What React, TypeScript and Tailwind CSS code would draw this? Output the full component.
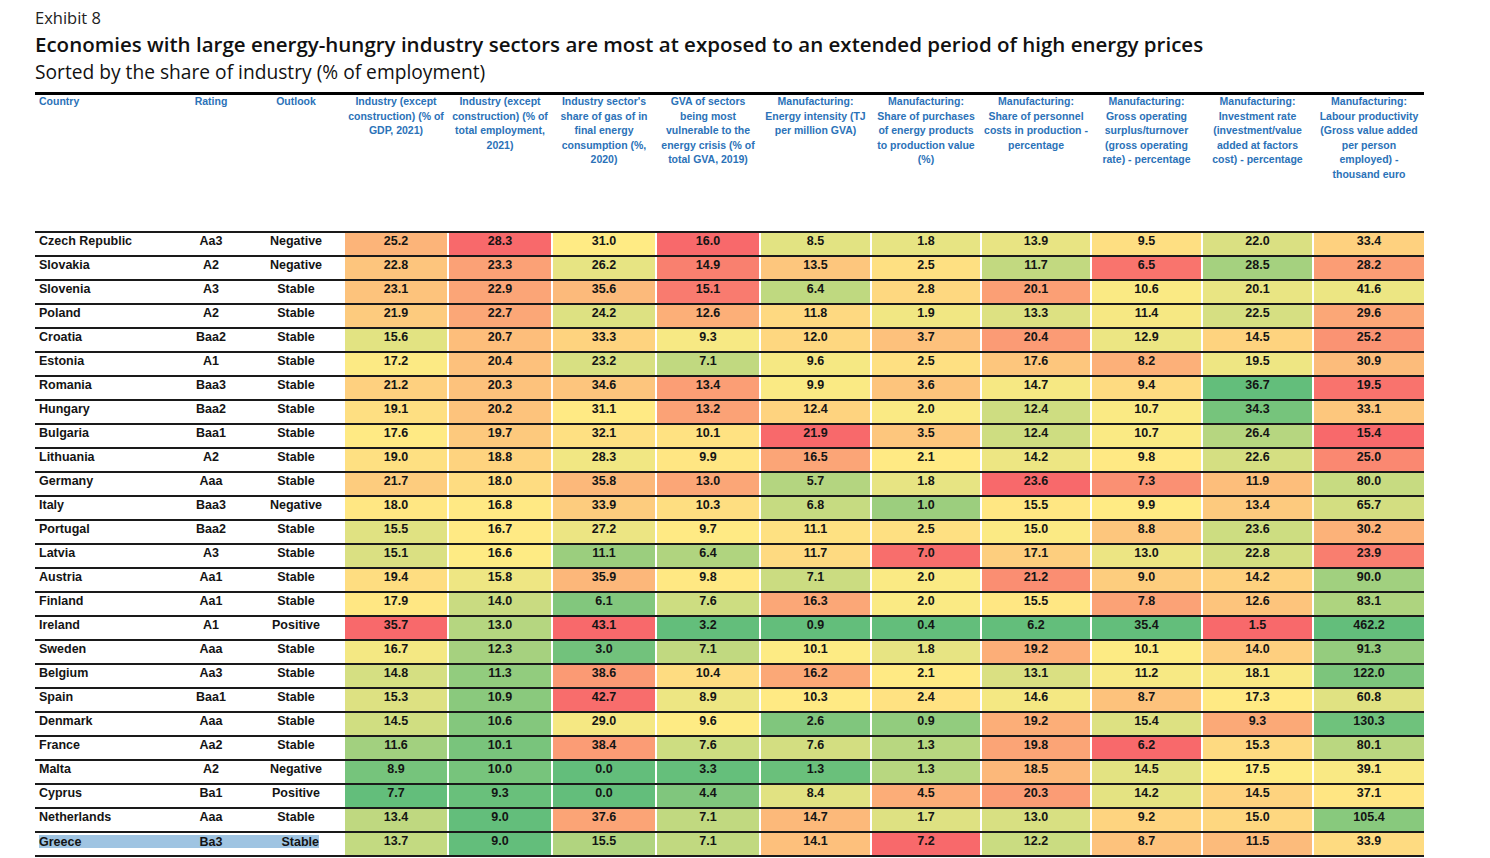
import React from "react";

type Row = [string, string, string, ...string[]];

const ROWS: Row[] = [
  ["Czech Republic", "Aa3", "Negative", "25.2", "28.3", "31.0", "16.0", "8.5", "1.8", "13.9", "9.5", "22.0", "33.4"],
  ["Slovakia", "A2", "Negative", "22.8", "23.3", "26.2", "14.9", "13.5", "2.5", "11.7", "6.5", "28.5", "28.2"],
  ["Slovenia", "A3", "Stable", "23.1", "22.9", "35.6", "15.1", "6.4", "2.8", "20.1", "10.6", "20.1", "41.6"],
  ["Poland", "A2", "Stable", "21.9", "22.7", "24.2", "12.6", "11.8", "1.9", "13.3", "11.4", "22.5", "29.6"],
  ["Croatia", "Baa2", "Stable", "15.6", "20.7", "33.3", "9.3", "12.0", "3.7", "20.4", "12.9", "14.5", "25.2"],
  ["Estonia", "A1", "Stable", "17.2", "20.4", "23.2", "7.1", "9.6", "2.5", "17.6", "8.2", "19.5", "30.9"],
  ["Romania", "Baa3", "Stable", "21.2", "20.3", "34.6", "13.4", "9.9", "3.6", "14.7", "9.4", "36.7", "19.5"],
  ["Hungary", "Baa2", "Stable", "19.1", "20.2", "31.1", "13.2", "12.4", "2.0", "12.4", "10.7", "34.3", "33.1"],
  ["Bulgaria", "Baa1", "Stable", "17.6", "19.7", "32.1", "10.1", "21.9", "3.5", "12.4", "10.7", "26.4", "15.4"],
  ["Lithuania", "A2", "Stable", "19.0", "18.8", "28.3", "9.9", "16.5", "2.1", "14.2", "9.8", "22.6", "25.0"],
  ["Germany", "Aaa", "Stable", "21.7", "18.0", "35.8", "13.0", "5.7", "1.8", "23.6", "7.3", "11.9", "80.0"],
  ["Italy", "Baa3", "Negative", "18.0", "16.8", "33.9", "10.3", "6.8", "1.0", "15.5", "9.9", "13.4", "65.7"],
  ["Portugal", "Baa2", "Stable", "15.5", "16.7", "27.2", "9.7", "11.1", "2.5", "15.0", "8.8", "23.6", "30.2"],
  ["Latvia", "A3", "Stable", "15.1", "16.6", "11.1", "6.4", "11.7", "7.0", "17.1", "13.0", "22.8", "23.9"],
  ["Austria", "Aa1", "Stable", "19.4", "15.8", "35.9", "9.8", "7.1", "2.0", "21.2", "9.0", "14.2", "90.0"],
  ["Finland", "Aa1", "Stable", "17.9", "14.0", "6.1", "7.6", "16.3", "2.0", "15.5", "7.8", "12.6", "83.1"],
  ["Ireland", "A1", "Positive", "35.7", "13.0", "43.1", "3.2", "0.9", "0.4", "6.2", "35.4", "1.5", "462.2"],
  ["Sweden", "Aaa", "Stable", "16.7", "12.3", "3.0", "7.1", "10.1", "1.8", "19.2", "10.1", "14.0", "91.3"],
  ["Belgium", "Aa3", "Stable", "14.8", "11.3", "38.6", "10.4", "16.2", "2.1", "13.1", "11.2", "18.1", "122.0"],
  ["Spain", "Baa1", "Stable", "15.3", "10.9", "42.7", "8.9", "10.3", "2.4", "14.6", "8.7", "17.3", "60.8"],
  ["Denmark", "Aaa", "Stable", "14.5", "10.6", "29.0", "9.6", "2.6", "0.9", "19.2", "15.4", "9.3", "130.3"],
  ["France", "Aa2", "Stable", "11.6", "10.1", "38.4", "7.6", "7.6", "1.3", "19.8", "6.2", "15.3", "80.1"],
  ["Malta", "A2", "Negative", "8.9", "10.0", "0.0", "3.3", "1.3", "1.3", "18.5", "14.5", "17.5", "39.1"],
  ["Cyprus", "Ba1", "Positive", "7.7", "9.3", "0.0", "4.4", "8.4", "4.5", "20.3", "14.2", "14.5", "37.1"],
  ["Netherlands", "Aaa", "Stable", "13.4", "9.0", "37.6", "7.1", "14.7", "1.7", "13.0", "9.2", "15.0", "105.4"],
  ["Greece", "Ba3", "Stable", "13.7", "9.0", "15.5", "7.1", "14.1", "7.2", "12.2", "8.7", "11.5", "33.9"],
];

const HEADERS: string[][] = [
  ["Industry (except", "construction) (% of", "GDP, 2021)"],
  ["Industry (except", "construction) (% of", "total employment,", "2021)"],
  ["Industry sector's", "share of gas of in", "final energy", "consumption (%,", "2020)"],
  ["GVA of sectors", "being most", "vulnerable to the", "energy crisis (% of", "total GVA, 2019)"],
  ["Manufacturing:", "Energy intensity (TJ", "per million GVA)"],
  ["Manufacturing:", "Share of purchases", "of energy products", "to production value", "(%)"],
  ["Manufacturing:", "Share of personnel", "costs in production -", "percentage"],
  ["Manufacturing:", "Gross operating", "surplus/turnover", "(gross operating", "rate) - percentage"],
  ["Manufacturing:", "Investment rate", "(investment/value", "added at factors", "cost) - percentage"],
  ["Manufacturing:", "Labour productivity", "(Gross value added", "per person", "employed) -", "thousand euro"],
];

const W = [
  "w-[102px]",
  "w-[102px]",
  "w-[102px]",
  "w-[102px]",
  "w-[109px]",
  "w-[108px]",
  "w-[108px]",
  "w-[109px]",
  "w-[109px]",
  "w-[110px]",
];

const RED = [248, 105, 107];
const YEL = [255, 235, 132];
const GRN = [99, 190, 123];

function mix(a: number[], b: number[], t: number) {
  const c = a.map((v, i) => Math.round(v + (b[i] - v) * t));
  return `rgb(${c[0]},${c[1]},${c[2]})`;
}

function median(s: number[]) {
  const n = s.length;
  const p = (n - 1) * 0.5;
  const lo = Math.floor(p);
  const hi = Math.ceil(p);
  return s[lo] + (s[hi] - s[lo]) * (p - lo);
}

// high values red for first 7 columns, low values red for last 3
const HIGH_RED = [true, true, true, true, true, true, true, false, false, false];

function computeColors(): string[][] {
  const colors: string[][] = ROWS.map(() => []);
  for (let c = 0; c < 10; c++) {
    const vals = ROWS.map((r) => parseFloat(r[c + 3]));
    const sorted = [...vals].sort((a, b) => a - b);
    const n = vals.length;
    vals.forEach((v, ri) => {
      let t: number;
      if (c === 9) {
        const idx = sorted.indexOf(v);
        const last = sorted.lastIndexOf(v);
        const rank = (idx + last) / 2;
        const p = rank / (n - 1);
        t = (p - 0.5) / 0.5;
      } else {
        const mn = sorted[0];
        const mx = sorted[n - 1];
        const md = median(sorted);
        if (v >= md) t = mx === md ? 0 : (v - md) / (mx - md);
        else t = md === mn ? 0 : -(md - v) / (md - mn);
      }
      const highColor = HIGH_RED[c] ? RED : GRN;
      const lowColor = HIGH_RED[c] ? GRN : RED;
      colors[ri][c] = t >= 0 ? mix(YEL, highColor, t) : mix(YEL, lowColor, -t);
    });
  }
  return colors;
}

export default function App() {
  const colors = computeColors();
  return (
    <div className="min-h-[858px] w-[1490px] bg-white pl-[35px] text-[#141414]">
      <div className="pt-[8px] font-['Open_Sans',sans-serif] text-[16.5px] leading-[20px] text-[#222]">Exhibit 8</div>
      <div className="mt-[3px] font-['Open_Sans',sans-serif] text-[20.5px] font-semibold leading-[26px] text-[#111]">
        Economies with large energy-hungry industry sectors are most at exposed to an extended period of high energy prices
      </div>
      <div className="mt-[3px] font-['Open_Sans',sans-serif] text-[19.2px] font-medium leading-[24px] text-[#111]">
        Sorted by the share of industry (% of employment)
      </div>

      <div className="mt-[8px] w-[1389px] font-['Liberation_Sans',Arial,sans-serif]">
        {/* header */}
        <div className="flex h-[139px] border-t-[3px] border-black text-[10.5px] font-bold leading-[14.6px] text-[#2b72b8]">
          <div className="-mt-[1px] w-[135px] pl-[4px]">Country</div>
          <div className="-mt-[1px] w-[82px] text-center">Rating</div>
          <div className="-mt-[1px] w-[88px] text-center">Outlook</div>
          <div className="-mt-[1px] ml-[5px] flex gap-[2px]">
            {HEADERS.map((h, i) => (
              <div key={i} className={`${W[i]} whitespace-nowrap text-center`}>
                {h.map((line, j) => (
                  <div key={j}>{line}</div>
                ))}
              </div>
            ))}
          </div>
        </div>

        {/* rows */}
        <div className="border-b-2 border-[#1a1a1a] text-[12.5px] font-bold leading-[16px] text-[#141414]">
          {ROWS.map((r, ri) => {
            const isGreece = r[0] === "Greece";
            return (
              <div key={r[0]} className="flex h-[24px] border-t-2 border-[#1a1a1a]">
                {isGreece ? (
                  <div className="w-[305px] pl-[4px] pt-[2px]">
                    <div className="flex h-[13px] w-[280px] items-center bg-[#9fc4e2]">
                      <div className="w-[131px]">{r[0]}</div>
                      <div className="w-[82px] text-center">{r[1]}</div>
                      <div className="w-[67px] text-right">{r[2]}</div>
                    </div>
                  </div>
                ) : (
                  <>
                    <div className="w-[135px] pl-[4px]">{r[0]}</div>
                    <div className="w-[82px] text-center">{r[1]}</div>
                    <div className="w-[88px] text-center">{r[2]}</div>
                  </>
                )}
                <div className="ml-[5px] flex gap-[2px]">
                  {r.slice(3).map((v, ci) => (
                    <div
                      key={ci}
                      className={`${W[ci]} h-[22px] text-center`}
                      style={{ backgroundColor: colors[ri][ci] }}
                    >
                      {v}
                    </div>
                  ))}
                </div>
              </div>
            );
          })}
        </div>
      </div>
    </div>
  );
}
